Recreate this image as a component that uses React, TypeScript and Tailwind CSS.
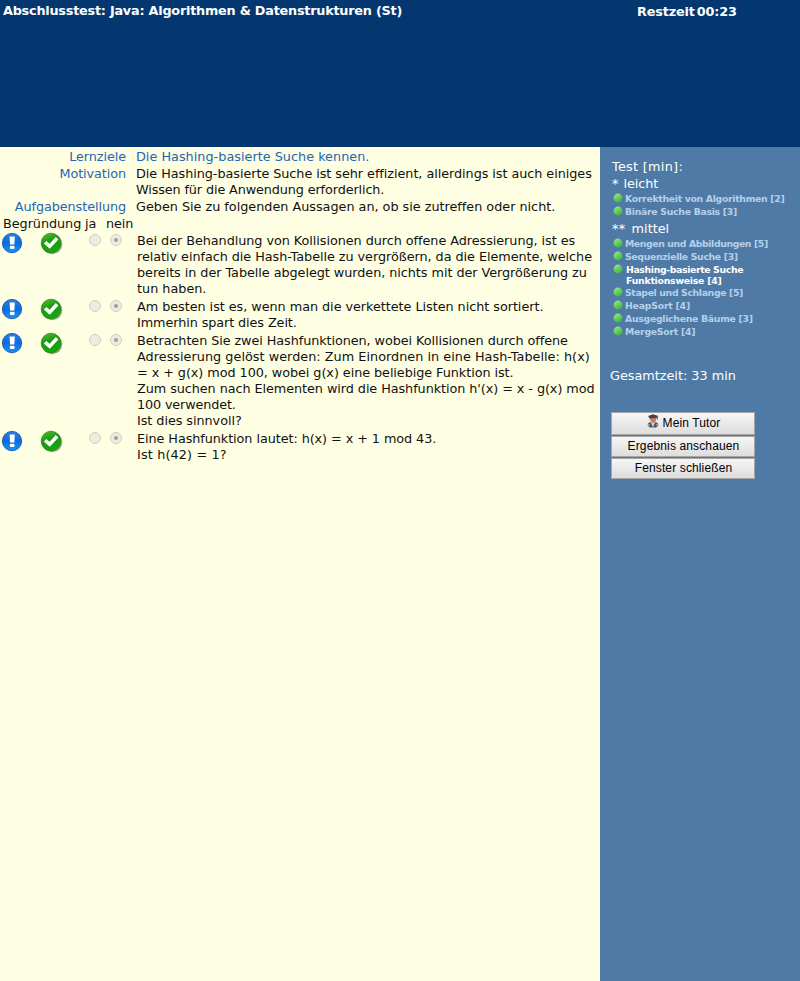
import React from "react";

const SANS = "font-['DejaVu_Sans',Verdana,sans-serif]";

type Line = [text: string, tracking: string];

function InfoIcon() {
  return (
    <svg width="22" height="22" viewBox="0 0 22 22" className="block">
      <defs>
        <linearGradient id="infoFill" x1="0" y1="0" x2="0" y2="1">
          <stop offset="0" stopColor="#2a7fe0" />
          <stop offset="0.5" stopColor="#0b6be0" />
          <stop offset="1" stopColor="#1496fb" />
        </linearGradient>
      </defs>
      <circle cx="11" cy="11.3" r="10.2" fill="#9fb9c4" opacity="0.6" />
      <circle cx="11" cy="11" r="9.6" fill="url(#infoFill)" stroke="#0a4fae" strokeWidth="0.8" />
      <path d="M8.6 4.4h5.2l-.4 8.2H9z" fill="#fff" />
      <rect x="8.9" y="13.7" width="4.6" height="3.4" rx="0.8" fill="#fff" />
    </svg>
  );
}

function CheckIcon() {
  return (
    <svg width="23" height="23" viewBox="0 0 23 23" className="block">
      <defs>
        <linearGradient id="checkFill" x1="0" y1="0" x2="0.4" y2="1">
          <stop offset="0" stopColor="#5cc038" />
          <stop offset="0.5" stopColor="#1e9714" />
          <stop offset="1" stopColor="#12a80c" />
        </linearGradient>
      </defs>
      <circle cx="12.1" cy="12.1" r="10.2" fill="#56704c" opacity="0.65" />
      <circle cx="11" cy="11" r="9.8" fill="url(#checkFill)" stroke="#178510" strokeWidth="0.7" />
      <path d="M3.8 11.4L6.4 8.9l3.2 2.8L15.8 4.9l2.6 2.6-8.6 9.2z" fill="#fff" />
    </svg>
  );
}

function Radio({ checked = false }: { checked?: boolean }) {
  return (
    <span className="flex size-[10px] items-center justify-center rounded-full bg-[#ecece0] outline outline-[#ccccc2]">
      {checked && <span className="size-1 rounded-full bg-[#a0a09a]" />}
    </span>
  );
}

const questions: { height: string; lines: Line[] }[] = [
  {
    height: "h-[66px]",
    lines: [
      ["Bei der Behandlung von Kollisionen durch offene Adressierung, ist es", "tracking-[-0.05px]"],
      ["relativ einfach die Hash-Tabelle zu vergrößern, da die Elemente, welche", "tracking-[-0.05px]"],
      ["bereits in der Tabelle abgelegt wurden, nichts mit der Vergrößerung zu", "tracking-[-0.05px]"],
      ["tun haben.", ""],
    ],
  },
  {
    height: "h-[34px]",
    lines: [
      ["Am besten ist es, wenn man die verkettete Listen nicht sortiert.", "tracking-[-0.04px]"],
      ["Immerhin spart dies Zeit.", "tracking-[-0.09px]"],
    ],
  },
  {
    height: "h-[98px]",
    lines: [
      ["Betrachten Sie zwei Hashfunktionen, wobei Kollisionen durch offene", "tracking-[-0.075px]"],
      ["Adressierung gelöst werden: Zum Einordnen in eine Hash-Tabelle: h(x)", "tracking-[0.03px]"],
      ["= x + g(x) mod 100, wobei g(x) eine beliebige Funktion ist.", "tracking-[-0.06px]"],
      ["Zum suchen nach Elementen wird die Hashfunktion h'(x) = x - g(x) mod", "tracking-[-0.065px]"],
      ["100 verwendet.", "tracking-[-0.14px]"],
      ["Ist dies sinnvoll?", "tracking-[-0.05px]"],
    ],
  },
  {
    height: "h-[34px]",
    lines: [
      ["Eine Hashfunktion lautet: h(x) = x + 1 mod 43.", "tracking-[-0.07px]"],
      ["Ist h(42) = 1?", "tracking-[0.15px]"],
    ],
  },
];

function Lines({ lines }: { lines: Line[] }) {
  return (
    <>
      {lines.map(([text, tracking]) => (
        <div key={text} className={`whitespace-nowrap ${tracking}`}>{text}</div>
      ))}
    </>
  );
}

function Question({ height, lines }: { height: string; lines: Line[] }) {
  return (
    <div className={`flex items-start ${height}`}>
      <div className="w-10 pl-px"><InfoIcon /></div>
      <div className="w-[50px]"><CheckIcon /></div>
      <div className="flex w-[47px] gap-[11px] pt-[3px]">
        <Radio />
        <Radio checked />
      </div>
      <div className="pt-px leading-4 text-[#111]"><Lines lines={lines} /></div>
    </div>
  );
}

function Info({ label, lines, height, blue = false }: { label: string; lines: Line[]; height: string; blue?: boolean }) {
  return (
    <div className={`flex leading-4 ${height}`}>
      <div className="mr-[10px] w-[126px] text-right tracking-[-0.08px] text-[#2465b5]">{label}</div>
      <div className={blue ? "text-[#2465b5]" : "text-[#111]"}><Lines lines={lines} /></div>
    </div>
  );
}

function Dot() {
  return (
    <svg width="10" height="10" viewBox="0 0 10 10" className="mt-px mr-[2px] block shrink-0">
      <defs>
        <linearGradient id="dotFill" x1="0.2" y1="0" x2="0.8" y2="1">
          <stop offset="0" stopColor="#a3e39b" />
          <stop offset="0.5" stopColor="#62ce57" />
          <stop offset="1" stopColor="#39b935" />
        </linearGradient>
      </defs>
      <circle cx="5" cy="5" r="4.4" fill="url(#dotFill)" />
    </svg>
  );
}

const SMALL = "text-[9.3px] font-bold whitespace-nowrap";

function Topic({ title, tracking }: { title: string; tracking: string }) {
  return (
    <div className={`flex h-[13px] leading-[13px] text-[#b5d0ea] ${SMALL}`}>
      <Dot />
      <span className={tracking}>{title}</span>
    </div>
  );
}

function TutorIcon() {
  return (
    <svg width="12" height="14" viewBox="0 0 12 14" className="mr-[4px] -mt-1 block">
      <path d="M1 12Q0 8.5 4 8H8Q12 8.5 11 12L9 13.4H3z" fill="#515563" />
      <path d="M3.6 8L6 13.4 8.4 8z" fill="#b9c8f0" />
      <circle cx="6.2" cy="5.8" r="2.8" fill="#c98058" />
      <path d="M1 2L6 .3 11.4 2 9.4 4.4Q6 3.4 3 5z" fill="#4c4444" />
      <path d="M10.4 2v4" stroke="#e2542c" strokeWidth="1" />
      <path d="M.8 11.6l2-1.2M9.4 10.4l2 1.2" stroke="#dda080" strokeWidth="1.3" />
    </svg>
  );
}

function SideButton({ children, height }: { children: React.ReactNode; height: string }) {
  return (
    <button
      className={`flex w-36 items-center justify-center border border-[#a6a6a6] bg-linear-to-b from-[#f6f6f6] to-[#dddddd] pb-[2px] pl-px font-['Liberation_Sans',Arial,sans-serif] text-[12px] tracking-[0.13px] text-black ${height}`}
    >
      {children}
    </button>
  );
}

export default function App() {
  return (
    <div className={`flex h-[981px] w-[800px] flex-col overflow-hidden text-[12.8px] ${SANS}`}>
      <header className="flex h-[147px] bg-[#043770] pt-[3px] leading-4 font-bold text-white">
        <div className="w-[637px] pl-[3px] tracking-[-0.22px]">Abschlusstest: Java: Algorithmen &amp; Datenstrukturen (St)</div>
        <div className="flex gap-[2px] pt-px tracking-[-0.15px]"><span>Restzeit</span><span>00:23</span></div>
      </header>
      <div className="flex flex-1">
        <main className="w-[600px] bg-[#fefee2] pt-[2px]">
          <Info label="Lernziele" height="h-[17px]" blue lines={[["Die Hashing-basierte Suche kennen.", "tracking-[0.02px]"]]} />
          <Info
            label="Motivation"
            height="h-[33px]"
            lines={[
              ["Die Hashing-basierte Suche ist sehr effizient, allerdings ist auch einiges", "tracking-[-0.05px]"],
              ["Wissen für die Anwendung erforderlich.", "tracking-[-0.12px]"],
            ]}
          />
          <Info
            label="Aufgabenstellung"
            height="h-[17px]"
            lines={[["Geben Sie zu folgenden Aussagen an, ob sie zutreffen oder nicht.", "tracking-[-0.01px]"]]}
          />
          <div className="flex h-[16px] pl-[3px] leading-4 text-[#111]">
            <span className="w-[82px] tracking-[-0.05px]">Begründung</span>
            <span className="w-[21px]">ja</span>
            <span className="tracking-[-0.1px]">nein</span>
          </div>
          {questions.map((q) => <Question key={q.lines[0][0]} {...q} />)}
        </main>
        <aside className="w-[200px] bg-[#4f7aa5] pt-[11px] pl-[11px] text-white">
          <div className="pl-px leading-[17px]">
            <div className="tracking-[0.3px]">Test [min]:</div>
            <div className="flex gap-[5px]"><span>*</span><span className="tracking-[-0.05px]">leicht</span></div>
          </div>
          <div className="pl-[2px]">
            <Topic title="Korrektheit von Algorithmen [2]" tracking="tracking-[-0.3px]" />
            <Topic title="Binäre Suche Basis [3]" tracking="tracking-[-0.28px]" />
          </div>
          <div className="flex h-[19px] gap-[6px] pt-[2px] pl-px leading-[17px]">
            <span className="tracking-[0.4px]">**</span><span>mittel</span>
          </div>
          <div className="pl-[2px]">
            <Topic title="Mengen und Abbildungen [5]" tracking="tracking-[-0.38px]" />
            <Topic title="Sequenzielle Suche [3]" tracking="tracking-[-0.33px]" />
            <div className={`flex h-[23px] leading-[11px] tracking-[-0.35px] ${SMALL}`}>
              <Dot />
              <div className="pt-px pl-px">
                <div>Hashing-basierte Suche</div>
                <div className="tracking-[-0.23px]">Funktionsweise [4]</div>
              </div>
            </div>
            <Topic title="Stapel und Schlange [5]" tracking="tracking-[-0.35px]" />
            <Topic title="HeapSort [4]" tracking="tracking-[-0.2px]" />
            <Topic title="Ausgeglichene Bäume [3]" tracking="tracking-[-0.28px]" />
            <Topic title="MergeSort [4]" tracking="tracking-[-0.25px]" />
          </div>
          <div className="mt-[30px] -ml-px leading-4">Gesamtzeit: 33 min</div>
          <div className="mt-7 flex flex-col gap-px">
            <SideButton height="h-[23px]"><TutorIcon />Mein Tutor</SideButton>
            <SideButton height="h-[21px]">Ergebnis anschauen</SideButton>
            <SideButton height="h-[21px]">Fenster schließen</SideButton>
          </div>
        </aside>
      </div>
    </div>
  );
}
